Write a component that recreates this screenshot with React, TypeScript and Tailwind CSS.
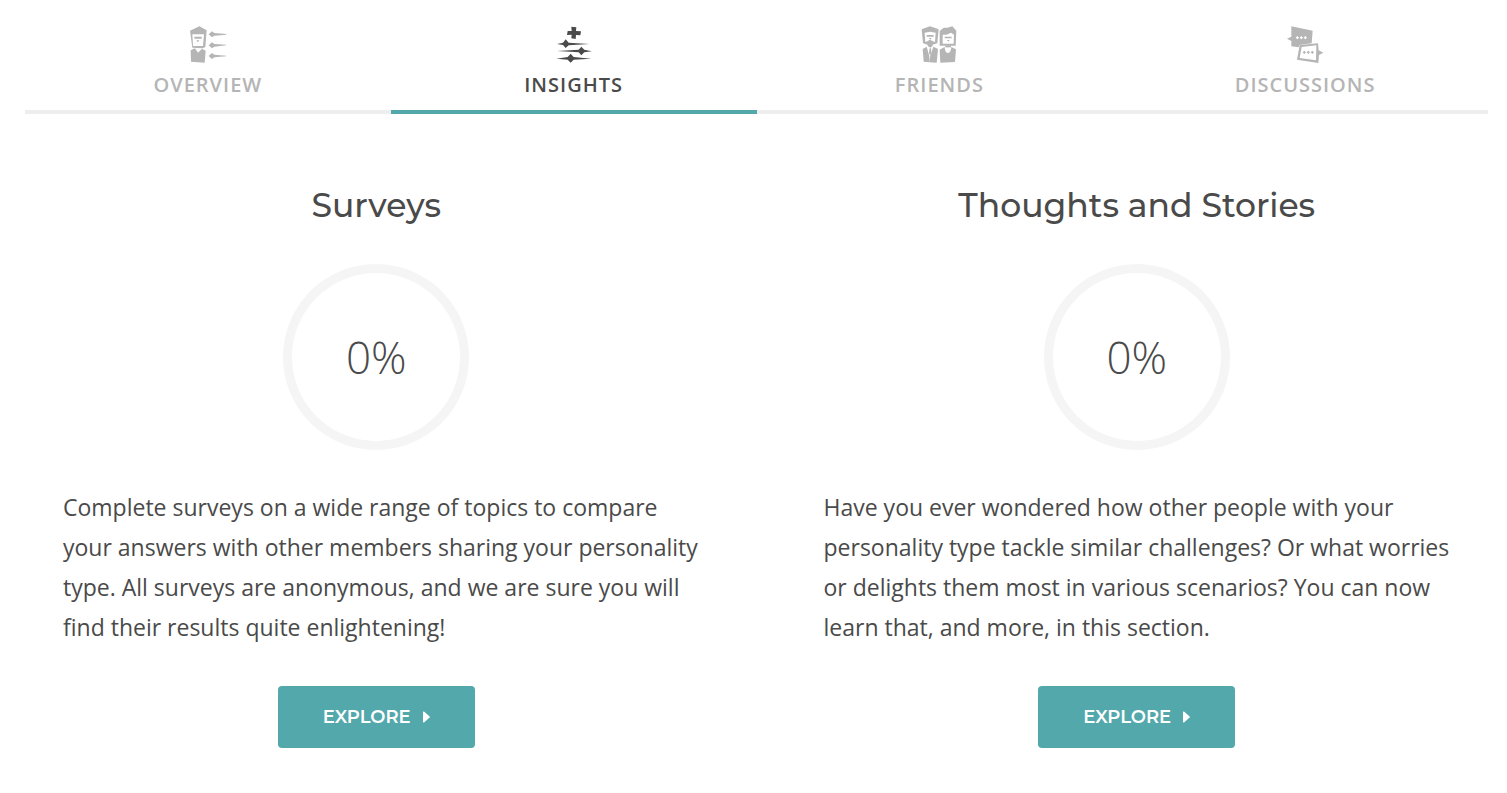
import type { ReactNode } from "react";

function OverviewIcon() {
  return (
    <svg viewBox="24 21 120 120" className="size-10" fill="currentColor" aria-hidden="true">
      <path
        fillRule="evenodd"
        d="M30 38 L58 25 L80 37 L76 87 L68 91 L37 89 Z M37 49 L39 84 L69 84 L72 49 Z"
      />
      <path d="M43 56h22v6H43zM49 67h9l-4 6z" />
      <path d="M32 97 L45 91 L54 104 L66 92 L77 98 L74 134 L33 131 Z" />
      <path d="M86 49 L96 40 L103 45 L139 48 L139 50 L103 53 L96 58 Z" />
      <path d="M86 82 L96 73 L103 78 L139 80 L139 82 L103 86 L96 91 Z" />
      <path d="M86 114 L96 105 L103 110 L139 113 L139 115 L103 118 L96 123 Z" />
    </svg>
  );
}

function InsightsIcon() {
  return (
    <svg viewBox="24 21 120 120" className="size-10" fill="currentColor" aria-hidden="true">
      <path d="M76 26 L91 28 L90 39 L105 40 L103 52 L90 51 L89 63 L76 61 L77 50 L63 51 L65 39 L77 39 Z" />
      <path d="M33 78 L51 74 L59 64 L68 74 L130 78 L68 82 L59 90 L51 81 Z" />
      <path d="M33 99 L98 95 L106 86 L115 95 L137 100 L115 103 L106 112 L98 103 Z" />
      <path d="M31 122 L65 117 L74 107 L83 117 L136 122 L83 125 L74 134 L65 125 Z" />
    </svg>
  );
}

function FriendsIcon() {
  return (
    <svg viewBox="22 21 120 120" className="size-10" fill="currentColor" aria-hidden="true">
      <path
        fillRule="evenodd"
        d="M30 34 L55 25 L81 34 L77 76 L62 80 L48 80 L34 76 Z M39 44 L41 72 L47 70 L55 65 L64 70 L70 72 L72 44 L55 41 Z"
      />
      <path d="M45 51h21v5H45zM51 60h9l-4 5z" />
      <path d="M48 78h15v6l-7 5-8-5z" />
      <path d="M33 93 L45 86 L53 114 L54 133 L36 131 Z" />
      <path d="M65 86 L79 93 L75 134 L53 133 L56 114 Z" />
      <path d="M54 91h4l1 13-3 10-4-10z" />
      <path
        fillRule="evenodd"
        d="M84 39 L96 29 L107 29 L122 25 L134 38 L132 83 L84 83 Z M93 50 L93 77 L126 77 L127 50 L118 44 L105 50 Z"
      />
      <path d="M99 56h21v5H99zM106 66h8l-4 5z" />
      <path d="M101 82h17v6h-17z" />
      <path d="M84 95 L99 87 Q100 105 109 105 Q118 104 119 87 L133 94 L130 132 L86 134 Z" />
    </svg>
  );
}

function DiscussionsIcon() {
  return (
    <svg viewBox="24 21 120 120" className="size-10" fill="currentColor" aria-hidden="true">
      <path d="M43 25 L107 38 L104 76 L67 81 L65 88 L43 85 L43 69 L30 62 L43 56 Z" />
      <path
        fillRule="evenodd"
        d="M68 81 L123 76 L125 97 L139 104 L126 111 L124 135 L60 125 Z M74 87 L68 120 L117 127 L118 82 Z"
      />
      <path d="M77 103l5-5 5 5-5 5zM89 103l5-5 5 5-5 5zM101 103l5-5 5 5-5 5z" />
      <path
        fill="#fff"
        d="M56 59l5-5 5 5-5 5zM68 59l5-5 5 5-5 5zM80 59l5-5 5 5-5 5z"
      />
    </svg>
  );
}

interface Tab {
  label: string;
  icon: ReactNode;
  active?: boolean;
}

const tabs: Tab[] = [
  { label: "OVERVIEW", icon: <OverviewIcon /> },
  { label: "INSIGHTS", icon: <InsightsIcon />, active: true },
  { label: "FRIENDS", icon: <FriendsIcon /> },
  { label: "DISCUSSIONS", icon: <DiscussionsIcon /> },
];

const sections = [
  {
    title: "Surveys",
    progress: 0,
    text: "Complete surveys on a wide range of topics to compare your answers with other members sharing your personality type. All surveys are anonymous, and we are sure you will find their results quite enlightening!",
  },
  {
    title: "Thoughts and Stories",
    progress: 0,
    text: "Have you ever wondered how other people with your personality type tackle similar challenges? Or what worries or delights them most in various scenarios? You can now learn that, and more, in this section.",
  },
];

function ProgressRing({ value }: { value: number }) {
  return (
    <div className="grid size-[186px] place-items-center rounded-full border-[9px] border-[#f5f5f5]">
      <span className="text-[44px] font-light leading-none">{value}%</span>
    </div>
  );
}

export default function App() {
  return (
    <div className="min-h-screen bg-white pl-[25px] pr-[19px] font-['Open_Sans',sans-serif] text-[#4a4a4a]">
      <nav className="grid grid-cols-4" aria-label="Profile">
        {tabs.map((tab) => (
          <a
            key={tab.label}
            href="#"
            aria-current={tab.active ? "page" : undefined}
            className={
              tab.active
                ? "flex flex-col items-center gap-1 border-b-4 border-[#52a8ab] pb-[9px] pt-[25px] text-[#4a4a4a]"
                : "flex flex-col items-center gap-1 border-b-4 border-[#eeeeee] pb-[9px] pt-[25px] text-[#b5b5b5]"
            }
          >
            {tab.icon}
            <span className="text-xl font-semibold leading-[32px] tracking-wider">{tab.label}</span>
          </a>
        ))}
      </nav>
      <main className="grid grid-cols-2 gap-[134px] px-[38px] pt-[67px]">
        {sections.map((section) => (
          <section key={section.title} className="flex flex-col items-center">
            <h2 className="font-['Montserrat','Inter',sans-serif] text-[33px] font-medium leading-[48px]">
              {section.title}
            </h2>
            <div className="mt-[35px]">
              <ProgressRing value={section.progress} />
            </div>
            <p className="-mr-3 mt-[37px] self-stretch text-[23px] leading-[40px]">{section.text}</p>
            <button
              type="button"
              className="mt-[39px] flex h-[62px] w-[197px] items-center justify-center gap-3 rounded bg-[#52a8ab] font-['Montserrat','Inter',sans-serif] text-lg font-semibold text-white"
            >
              EXPLORE
              <svg viewBox="0 0 7 12" className="h-3 w-[7px]" fill="currentColor" aria-hidden="true">
                <path d="M0 1.2 Q0 0 1 .6 L6.6 5.4 Q7.1 6 6.6 6.6 L1 11.4 Q0 12 0 10.8 Z" />
              </svg>
            </button>
          </section>
        ))}
      </main>
    </div>
  );
}
